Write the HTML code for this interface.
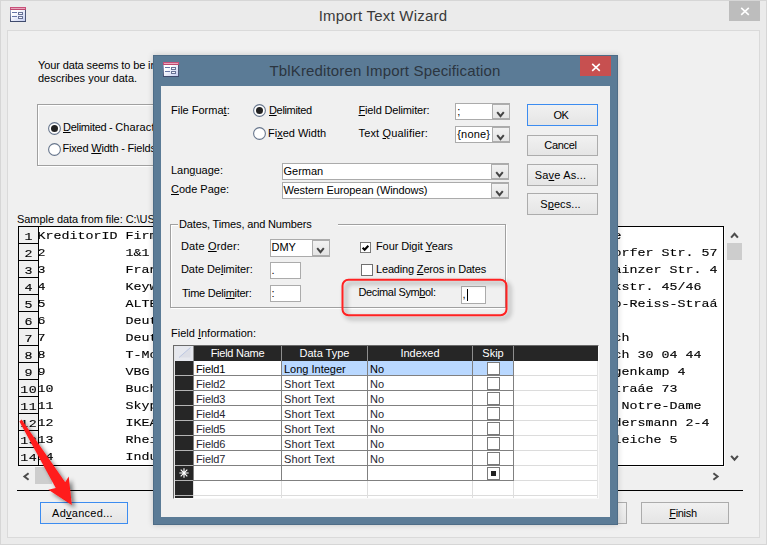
<!DOCTYPE html>
<html><head><meta charset="utf-8"><title>Import Text Wizard</title>
<style>
html,body{margin:0;padding:0;}
body{width:767px;height:545px;overflow:hidden;position:relative;background:#ebebeb;font-family:"Liberation Sans",sans-serif;font-size:11px;line-height:13px;color:#000;}
div,span,svg,i{position:absolute;box-sizing:border-box;}
.abs{position:absolute;}
.t{white-space:nowrap;font-size:11px;line-height:13px;}
u{text-decoration:underline;text-underline-offset:1px;text-decoration-thickness:1px;}
.title{white-space:nowrap;font-size:15px;line-height:18px;text-align:center;}
.combo{background:#fff;border:1px solid #ababab;}
.ct{left:0.5px;top:1px;white-space:nowrap;font-size:11px;line-height:13px;}
.cbtn{top:0;width:18px;border:1px solid #adadad;border-left:1px solid #adadad;background:linear-gradient(#f2f2f2,#e4e4e4);}
.chev{left:2.6px;top:6px;}
.tbox{background:#fff;border:1px solid #ababab;}
.caret{left:5px;top:2px;width:1px;height:12px;background:#000;}
.btn{border:1px solid #acacac;background:linear-gradient(#f1f1f1,#e5e5e5);text-align:center;white-space:nowrap;font-size:11px;}
.btn.focus{border-color:#3c8cf0;}
.hl{background:#a0a0a0;}
.mono{font-family:"Liberation Mono",monospace;font-size:13.33px;line-height:17px;white-space:pre;color:#000;-webkit-text-stroke:0.15px #000;transform:scaleY(0.88);transform-origin:0 12.5px;}
.rn{left:0;width:21px;height:18px;border:1px solid #000;background:#f0f0f0;text-align:center;font-family:"Liberation Mono",monospace;font-size:13.33px;letter-spacing:0.4px;padding-left:0.4px;padding-top:1px;line-height:17px;color:#000;-webkit-text-stroke:0.15px #000;}
.rd{position:static;display:inline-block;transform:scaleY(0.88);transform-origin:50% 12.5px;}
.hd{background:#262626;color:#fff;text-align:center;font-size:11px;line-height:14px;white-space:nowrap;}
.cell{white-space:nowrap;font-size:11px;line-height:14px;color:#3c3c3c;padding-left:2px;}
</style></head><body>

<div id="outer" style="left:0;top:0;width:767px;height:545px;background:#ebebeb;border:1px solid #d6d6d6;"></div>
<svg class="abs" style="left:10px;top:7px" width="16" height="15" viewBox="0 0 16 15" shape-rendering="crispEdges">
<defs><linearGradient id="ig10" x1="0" y1="0" x2="1" y2="1"><stop offset="0.25" stop-color="#ffffff"/><stop offset="1" stop-color="#c4cdf0"/></linearGradient>
<linearGradient id="il10" x1="0" y1="0" x2="0" y2="1"><stop offset="0.2" stop-color="#a4aecb"/><stop offset="1" stop-color="#3e486a"/></linearGradient></defs>
<rect x="0" y="0" width="16" height="15" fill="url(#il10)"/>
<rect x="15" y="3" width="1" height="12" fill="#4c5678"/>
<rect x="0" y="14" width="16" height="1" fill="#3e4a6c"/>
<rect x="1" y="3" width="14" height="11" fill="url(#ig10)"/>
<rect x="0" y="0" width="16" height="3" fill="#c8507a"/>
<rect x="1" y="1" width="14" height="1" fill="#e9a4bb"/>
<rect x="0" y="2" width="16" height="1" fill="#bd4a70"/>
<rect x="2" y="5" width="5" height="1" fill="#6676a6"/>
<rect x="2" y="9" width="5" height="1" fill="#6676a6"/>
<rect x="8" y="5" width="5" height="3" fill="#687296"/>
<rect x="9" y="6" width="3" height="1" fill="#f4f6fc"/>
<rect x="8" y="9" width="5" height="3" fill="#687296"/>
<rect x="9" y="10" width="3" height="1" fill="#f4f6fc"/>
</svg>
<div class="title" style="left:0;top:7px;width:766px;color:#3a3a3a;letter-spacing:0.22px;">Import Text Wizard</div>
<div class="" style="left:729px;top:1px;width:31px;height:20px;background:#bdbdbd;"></div>
<svg class="abs" style="left:739.5px;top:6px" width="10" height="10" viewBox="0 0 10 10"><path d="M1.2 1.8 L8.8 8.8 M8.8 1.8 L1.2 8.8" stroke="#fff" stroke-width="1.6" fill="none"/></svg>
<div class="" style="left:7px;top:30px;width:753px;height:508px;background:#f0f0f0;border:1px solid #dadada;"></div>
<span class="t " style="left:38px;top:59px;letter-spacing:-0.12px;">Your data seems to be in the format described</span>
<span class="t " style="left:38px;top:72px;">describes your data.</span>
<div class="" style="left:37px;top:104px;width:400px;height:62px;border:1px solid #a0a0a0;box-shadow:1px 1px 0 #fff, inset 1px 1px 0 #fff;"></div>
<svg class="abs" style="left:48.0px;top:122.0px" width="13" height="13" viewBox="0 0 13 13"><circle cx="6.5" cy="6.5" r="5.9" fill="#fff" stroke="#66758c" stroke-width="1.1"/><circle cx="6.5" cy="6.5" r="3.5" fill="#222"/></svg>
<span class="t " style="left:63px;top:121px;letter-spacing:-0.28px;"><u>D</u>elimited - <span style="position:static;letter-spacing:0.12px">Characters such as comma or tab</span></span>
<svg class="abs" style="left:48.0px;top:143.0px" width="13" height="13" viewBox="0 0 13 13"><circle cx="6.5" cy="6.5" r="5.9" fill="#fff" stroke="#66758c" stroke-width="1.1"/></svg>
<span class="t " style="left:62.5px;top:142px;letter-spacing:-0.2px;">Fixed <u>W</u>idth - Fields are aligned in columns</span>
<span class="t " style="left:17px;top:213px;letter-spacing:-0.06px;">Sample data from file: C:\USERS\DATA\KREDITOREN.TXT</span>
<div style="left:18px;top:226px;width:706px;height:240px;background:#fff;border:1px solid #000;overflow:hidden;box-shadow:1px 1px 0 #fafafa;">
<div class="rn" style="top:-1.0px;left:-1px;height:18px;"><span class="rd">1</span></div>
<span class="mono" style="left:18.6px;top:-0.4px;">KreditorID Firma</span>
<span class="mono" style="left:594.6px;top:-0.4px;">e</span>
<div class="rn" style="top:16.0px;left:-1px;height:18px;"><span class="rd">2</span></div>
<span class="mono" style="left:18.6px;top:16.6px;">2          1&amp;1 I</span>
<span class="mono" style="left:594.6px;top:16.6px;">orfer Str. 57</span>
<div class="rn" style="top:33.0px;left:-1px;height:18px;"><span class="rd">3</span></div>
<span class="mono" style="left:18.6px;top:33.6px;">3          Frank</span>
<span class="mono" style="left:594.6px;top:33.6px;">ainzer Str. 4</span>
<div class="rn" style="top:50.0px;left:-1px;height:18px;"><span class="rd">4</span></div>
<span class="mono" style="left:18.6px;top:50.6px;">4          Keywo</span>
<span class="mono" style="left:594.6px;top:50.6px;">kstr. 45/46</span>
<div class="rn" style="top:67.0px;left:-1px;height:18px;"><span class="rd">5</span></div>
<span class="mono" style="left:18.6px;top:67.6px;">5          ALTER</span>
<span class="mono" style="left:594.6px;top:67.6px;">o-Reiss-Straá</span>
<div class="rn" style="top:84.0px;left:-1px;height:18px;"><span class="rd">6</span></div>
<span class="mono" style="left:18.6px;top:84.6px;">6          Deuts</span>
<div class="rn" style="top:101.0px;left:-1px;height:18px;"><span class="rd">7</span></div>
<span class="mono" style="left:18.6px;top:101.6px;">7          Deuts</span>
<span class="mono" style="left:594.6px;top:101.6px;">ch</span>
<div class="rn" style="top:118.0px;left:-1px;height:18px;"><span class="rd">8</span></div>
<span class="mono" style="left:18.6px;top:118.6px;">8          T-Mob</span>
<span class="mono" style="left:594.6px;top:118.6px;">ch 30 04 44</span>
<div class="rn" style="top:135.0px;left:-1px;height:18px;"><span class="rd">9</span></div>
<span class="mono" style="left:18.6px;top:135.6px;">9          VBG  </span>
<span class="mono" style="left:594.6px;top:135.6px;">genkamp 4</span>
<div class="rn" style="top:152.0px;left:-1px;height:18px;"><span class="rd">10</span></div>
<span class="mono" style="left:18.6px;top:152.6px;">10         Buchh</span>
<span class="mono" style="left:594.6px;top:152.6px;">traáe 73</span>
<div class="rn" style="top:169.0px;left:-1px;height:18px;"><span class="rd">11</span></div>
<span class="mono" style="left:18.6px;top:169.6px;">11         Skype</span>
<span class="mono" style="left:594.6px;top:169.6px;"> Notre-Dame</span>
<div class="rn" style="top:186.0px;left:-1px;height:18px;"><span class="rd">12</span></div>
<span class="mono" style="left:18.6px;top:186.6px;">12         IKEA </span>
<span class="mono" style="left:594.6px;top:186.6px;">dersmann 2-4</span>
<div class="rn" style="top:203.0px;left:-1px;height:18px;"><span class="rd">13</span></div>
<span class="mono" style="left:18.6px;top:203.6px;">13         Rhein</span>
<span class="mono" style="left:594.6px;top:203.6px;">leiche 5</span>
<div class="rn" style="top:220.0px;left:-1px;height:19px;"><span class="rd">14</span></div>
<span class="mono" style="left:18.6px;top:220.6px;">14         Indus</span>
</div>
<svg class="abs" style="left:729px;top:231px" width="11" height="8" viewBox="0 0 11 8"><path d="M2.1 6.6 L5.5 2.9 L8.9 6.6" fill="none" stroke="#4c4c4c" stroke-width="2.1"/></svg>
<div class="" style="left:727px;top:243px;width:15px;height:17px;background:#cdcdcd;"></div>
<svg class="abs" style="left:729px;top:454px" width="11" height="8" viewBox="0 0 11 8"><path d="M2.1 1.9 L5.5 5.6 L8.9 1.9" fill="none" stroke="#4c4c4c" stroke-width="2.1"/></svg>
<svg class="abs" style="left:22px;top:471px" width="8" height="11" viewBox="0 0 8 11"><path d="M6.6 2.2 L2.4 5.5 L6.6 8.8" fill="none" stroke="#4c4c4c" stroke-width="2"/></svg>
<div class="" style="left:35px;top:467px;width:17px;height:17px;background:#cdcdcd;"></div>
<svg class="abs" style="left:711.5px;top:471px" width="8" height="11" viewBox="0 0 8 11"><path d="M1.4 2.2 L5.6 5.5 L1.4 8.8" fill="none" stroke="#4c4c4c" stroke-width="2"/></svg>
<div class="" style="left:17px;top:490px;width:726px;height:1px;background:#000;"></div>
<div class="btn focus" style="left:40px;top:502px;width:88px;height:22px;line-height:20px;letter-spacing:0.25px;padding-right:3px;">Ad<u>v</u>anced...</div>
<div class="btn" style="left:540px;top:502px;width:87px;height:22px;line-height:20px;padding-right:4px;"><u>N</u>ext &gt;</div>
<div class="btn" style="left:641px;top:502px;width:88px;height:22px;line-height:20px;letter-spacing:-0.3px;padding-right:4px;"><u>F</u>inish</div>
<div id="dlg" style="left:153px;top:55px;width:465px;height:470px;background:#5b7b96;border:1px solid #4e6c86;box-shadow:0 0 6px rgba(0,0,0,0.18);"></div>
<svg class="abs" style="left:163px;top:62px" width="16" height="15" viewBox="0 0 16 15" shape-rendering="crispEdges">
<defs><linearGradient id="ig163" x1="0" y1="0" x2="1" y2="1"><stop offset="0.25" stop-color="#ffffff"/><stop offset="1" stop-color="#c4cdf0"/></linearGradient>
<linearGradient id="il163" x1="0" y1="0" x2="0" y2="1"><stop offset="0.2" stop-color="#a4aecb"/><stop offset="1" stop-color="#3e486a"/></linearGradient></defs>
<rect x="0" y="0" width="16" height="15" fill="url(#il163)"/>
<rect x="15" y="3" width="1" height="12" fill="#4c5678"/>
<rect x="0" y="14" width="16" height="1" fill="#3e4a6c"/>
<rect x="1" y="3" width="14" height="11" fill="url(#ig163)"/>
<rect x="0" y="0" width="16" height="3" fill="#c8507a"/>
<rect x="1" y="1" width="14" height="1" fill="#e9a4bb"/>
<rect x="0" y="2" width="16" height="1" fill="#bd4a70"/>
<rect x="2" y="5" width="5" height="1" fill="#6676a6"/>
<rect x="2" y="9" width="5" height="1" fill="#6676a6"/>
<rect x="8" y="5" width="5" height="3" fill="#687296"/>
<rect x="9" y="6" width="3" height="1" fill="#f4f6fc"/>
<rect x="8" y="9" width="5" height="3" fill="#687296"/>
<rect x="9" y="10" width="3" height="1" fill="#f4f6fc"/>
</svg>
<div class="title" style="left:153px;top:62px;width:464px;color:#2b3540;letter-spacing:0.15px;">TblKreditoren Import Specification</div>
<div class="" style="left:580px;top:56px;width:31px;height:20px;background:#c75050;"></div>
<svg class="abs" style="left:591px;top:61.5px" width="10" height="10" viewBox="0 0 10 10"><path d="M1.2 1.8 L8.8 8.8 M8.8 1.8 L1.2 8.8" stroke="#fff" stroke-width="1.6" fill="none"/></svg>
<div class="" style="left:161px;top:86px;width:449px;height:431px;background:#f0f0f0;"></div>
<span class="t " style="left:171px;top:104px;">File Forma<u>t</u>:</span>
<svg class="abs" style="left:253.0px;top:104.0px" width="13" height="13" viewBox="0 0 13 13"><circle cx="6.5" cy="6.5" r="5.9" fill="#fff" stroke="#66758c" stroke-width="1.1"/><circle cx="6.5" cy="6.5" r="3.5" fill="#222"/></svg>
<span class="t " style="left:269px;top:104px;letter-spacing:-0.35px;"><u>D</u>elimited</span>
<svg class="abs" style="left:253.0px;top:127.0px" width="13" height="13" viewBox="0 0 13 13"><circle cx="6.5" cy="6.5" r="5.9" fill="#fff" stroke="#66758c" stroke-width="1.1"/></svg>
<span class="t " style="left:268px;top:127px;">Fi<u>x</u>ed Width</span>
<span class="t " style="left:358.5px;top:104px;letter-spacing:-0.15px;"><u>F</u>ield Delimiter:</span>
<span class="t " style="left:358.5px;top:127px;letter-spacing:0.15px;">Text <u>Q</u>ualifier:</span>
<div class="combo" style="left:455px;top:103px;width:55px;height:17px"><span class="ct" style="left:1.2px;">;</span><div class="cbtn" style="left:36px;height:15px"><svg class="chev" width="9" height="7" viewBox="0 0 9 7"><path d="M1.2 1.2 L4.5 5.2 L7.8 1.2" fill="none" stroke="#444" stroke-width="2"/></svg></div></div>
<div class="combo" style="left:455px;top:126px;width:55px;height:17px"><span class="ct" style="left:1.2px;letter-spacing:0.2px;">{none}</span><div class="cbtn" style="left:36px;height:15px"><svg class="chev" width="9" height="7" viewBox="0 0 9 7"><path d="M1.2 1.2 L4.5 5.2 L7.8 1.2" fill="none" stroke="#444" stroke-width="2"/></svg></div></div>
<div class="btn focus" style="left:527px;top:104px;width:71px;height:22px;line-height:20px;letter-spacing:-0.4px;padding-right:3px;">OK</div>
<div class="btn" style="left:527px;top:135px;width:71px;height:21px;line-height:19px;letter-spacing:-0.3px;padding-right:4px;">Cancel</div>
<div class="btn" style="left:527px;top:164px;width:71px;height:22px;line-height:20px;letter-spacing:0.2px;padding-right:4px;">Sa<u>v</u>e As...</div>
<div class="btn" style="left:527px;top:193px;width:71px;height:22px;line-height:20px;letter-spacing:0.1px;padding-right:4px;">S<u>p</u>ecs...</div>
<span class="t " style="left:171px;top:164px;">Lan<u>g</u>uage:</span>
<span class="t " style="left:171px;top:183px;"><u>C</u>ode Page:</span>
<div class="combo" style="left:282px;top:163px;width:227px;height:17px"><span class="ct" style="left:0.5px;">German</span><div class="cbtn" style="left:208px;height:15px"><svg class="chev" width="9" height="7" viewBox="0 0 9 7"><path d="M1.2 1.2 L4.5 5.2 L7.8 1.2" fill="none" stroke="#444" stroke-width="2"/></svg></div></div>
<div class="combo" style="left:282px;top:182px;width:227px;height:17px"><span class="ct" style="left:0.5px;letter-spacing:-0.1px;">Western European (Windows)</span><div class="cbtn" style="left:208px;height:15px"><svg class="chev" width="9" height="7" viewBox="0 0 9 7"><path d="M1.2 1.2 L4.5 5.2 L7.8 1.2" fill="none" stroke="#444" stroke-width="2"/></svg></div></div>
<div class="" style="left:170px;top:224px;width:336px;height:84px;border:1px solid #a0a0a0;box-shadow:1px 1px 0 #fff, inset 1px 1px 0 #fff;"></div>
<div class="" style="left:178px;top:220px;width:160px;height:10px;background:#f0f0f0;"></div>
<span class="t " style="left:179px;top:218px;letter-spacing:-0.15px;">Dates, Times, and Numbers</span>
<span class="t " style="left:181px;top:240px;letter-spacing:0.14px;">Date <u>O</u>rder:</span>
<span class="t " style="left:181px;top:263px;letter-spacing:-0.07px;">Date De<u>l</u>imiter:</span>
<span class="t " style="left:182px;top:287px;letter-spacing:-0.27px;">Time Deli<u>m</u>iter:</span>
<div class="combo" style="left:270px;top:239px;width:60px;height:18px"><span class="ct" style="left:0.5px;">DMY</span><div class="cbtn" style="left:41px;height:16px"><svg class="chev" width="9" height="7" viewBox="0 0 9 7"><path d="M1.2 1.2 L4.5 5.2 L7.8 1.2" fill="none" stroke="#444" stroke-width="2"/></svg></div></div>
<div class="tbox" style="left:270px;top:262px;width:31px;height:17px"><span class="ct">.</span></div>
<div class="tbox" style="left:270px;top:285px;width:31px;height:17px"><span class="ct">:</span></div>
<svg class="abs" style="left:360px;top:242px" width="11" height="11" viewBox="0 0 12 12"><rect x="0.5" y="0.5" width="11" height="11" fill="#fff" stroke="#707070"/><path d="M2.9 6.2 L5.1 8.4 L9.1 4.2" fill="none" stroke="#000" stroke-width="2.3"/></svg>
<span class="t " style="left:376px;top:240px;letter-spacing:-0.1px;">Four Digit <u>Y</u>ears</span>
<svg class="abs" style="left:361px;top:264px" width="12" height="12" viewBox="0 0 12 12"><rect x="0.5" y="0.5" width="11" height="11" fill="#fff" stroke="#707070"/></svg>
<span class="t " style="left:376px;top:263px;letter-spacing:-0.17px;">Leading <u>Z</u>eros in Dates</span>
<span class="t " style="left:358.5px;top:286px;letter-spacing:-0.36px;">Decimal Sym<u>b</u>ol:</span>
<div class="tbox" style="left:461px;top:286px;width:25px;height:18px"><span class="ct">,</span><i class="caret"></i></div>
<svg class="abs" style="left:330px;top:270px;overflow:visible" width="190" height="56" viewBox="0 0 190 56">
<defs><filter id="sh" x="-10%" y="-30%" width="125%" height="180%"><feGaussianBlur in="SourceAlpha" stdDeviation="2.4"/><feOffset dx="3" dy="3"/><feComponentTransfer><feFuncA type="linear" slope="0.42"/></feComponentTransfer><feMerge><feMergeNode/><feMergeNode in="SourceGraphic"/></feMerge></filter></defs>
<rect x="12.5" y="9.8" width="164" height="35.5" rx="6" ry="6" fill="none" stroke="#ff2020" stroke-width="2" filter="url(#sh)"/></svg>
<span class="t " style="left:171px;top:327px;">Field <u>I</u>nformation:</span>
<div style="left:173px;top:345px;width:426px;height:154px;background:#fff;border:1px solid #6a6a6a;border-right-color:#fafafa;border-bottom-color:#fafafa;overflow:hidden;">
<div style="left:0px;top:0px;width:1px;height:153px;background:#e6e6e6;"></div>
<div style="left:19px;top:-1px;width:405px;height:16px;background:#262626;"></div>
<div style="left:1px;top:0px;width:18px;height:15px;background:#e6e8ee;"><svg class="abs" style="left:0;top:0" width="18" height="15" viewBox="0 0 18 15"><path d="M4 11.5 L15.5 1.5 L15.5 11.5 Z" fill="#dcdee6"/><path d="M4 11.5 L15.5 1.5" stroke="#b8c4e0" stroke-width="0.9" fill="none"/></svg></div>
<div class="hd" style="left:20px;top:0px;width:87px;height:15px;letter-spacing:-0.25px;">Field Name</div>
<div class="hd" style="left:108px;top:0px;width:85px;height:15px;letter-spacing:0px;">Data Type</div>
<div class="hd" style="left:194px;top:0px;width:104px;height:15px;letter-spacing:0px;">Indexed</div>
<div class="hd" style="left:299px;top:0px;width:40px;height:15px;letter-spacing:0px;">Skip</div>
<div style="left:19px;top:0px;width:1px;height:15px;background:#8e8e8e;"></div>
<div style="left:107px;top:0px;width:1px;height:15px;background:#8e8e8e;"></div>
<div style="left:193px;top:0px;width:1px;height:15px;background:#8e8e8e;"></div>
<div style="left:298px;top:0px;width:1px;height:15px;background:#8e8e8e;"></div>
<div style="left:339px;top:0px;width:1px;height:15px;background:#8e8e8e;"></div>
<div style="left:1px;top:15px;width:18px;height:140px;background:#262626;"></div>
<div style="left:108px;top:15px;width:231px;height:14px;background:#b9d8ff;"></div>
<div style="left:20px;top:29px;width:404px;height:1px;background:#dcdcdc;"></div>
<div style="left:1px;top:29px;width:18px;height:1px;background:#b4b4b4;"></div>
<div style="left:20px;top:44px;width:404px;height:1px;background:#dcdcdc;"></div>
<div style="left:1px;top:44px;width:18px;height:1px;background:#b4b4b4;"></div>
<div style="left:20px;top:59px;width:404px;height:1px;background:#dcdcdc;"></div>
<div style="left:1px;top:59px;width:18px;height:1px;background:#b4b4b4;"></div>
<div style="left:20px;top:74px;width:404px;height:1px;background:#dcdcdc;"></div>
<div style="left:1px;top:74px;width:18px;height:1px;background:#b4b4b4;"></div>
<div style="left:20px;top:89px;width:404px;height:1px;background:#dcdcdc;"></div>
<div style="left:1px;top:89px;width:18px;height:1px;background:#b4b4b4;"></div>
<div style="left:20px;top:104px;width:404px;height:1px;background:#dcdcdc;"></div>
<div style="left:1px;top:104px;width:18px;height:1px;background:#b4b4b4;"></div>
<div style="left:20px;top:119px;width:404px;height:1px;background:#dcdcdc;"></div>
<div style="left:1px;top:119px;width:18px;height:1px;background:#b4b4b4;"></div>
<div style="left:20px;top:134px;width:404px;height:1px;background:#dcdcdc;"></div>
<div style="left:1px;top:134px;width:18px;height:1px;background:#b4b4b4;"></div>
<div style="left:20px;top:149px;width:404px;height:1px;background:#dcdcdc;"></div>
<div style="left:1px;top:149px;width:18px;height:1px;background:#b4b4b4;"></div>
<div style="left:19px;top:15px;width:1px;height:140px;background:#dedede;"></div>
<div style="left:107px;top:15px;width:1px;height:140px;background:#dedede;"></div>
<div style="left:193px;top:15px;width:1px;height:140px;background:#dedede;"></div>
<div style="left:298px;top:15px;width:1px;height:140px;background:#dedede;"></div>
<div style="left:339px;top:15px;width:1px;height:140px;background:#dedede;"></div>
<div style="left:423px;top:15px;width:1px;height:140px;background:#e4e4e4;"></div>
<div style="left:19px;top:29px;width:321px;height:1px;background:#808080;"></div>
<div style="left:19px;top:44px;width:321px;height:1px;background:#808080;"></div>
<div style="left:19px;top:59px;width:321px;height:1px;background:#808080;"></div>
<div style="left:19px;top:74px;width:321px;height:1px;background:#808080;"></div>
<div style="left:19px;top:89px;width:321px;height:1px;background:#808080;"></div>
<div style="left:19px;top:104px;width:321px;height:1px;background:#808080;"></div>
<div style="left:19px;top:119px;width:321px;height:1px;background:#808080;"></div>
<div style="left:19px;top:134px;width:321px;height:1px;background:#808080;"></div>
<div style="left:19px;top:15px;width:1px;height:120px;background:#808080;"></div>
<div style="left:107px;top:15px;width:1px;height:120px;background:#808080;"></div>
<div style="left:193px;top:15px;width:1px;height:120px;background:#808080;"></div>
<div style="left:298px;top:15px;width:1px;height:120px;background:#808080;"></div>
<div style="left:339px;top:15px;width:1px;height:120px;background:#808080;"></div>
<span class="cell" style="left:20px;top:15.8px;color:#000;letter-spacing:-0.12px">Field1</span>
<span class="cell" style="left:108px;top:15.8px;color:#000;letter-spacing:0px">Long Integer</span>
<span class="cell" style="left:194px;top:15.8px;color:#000">No</span>
<span class="cell" style="left:20px;top:30.8px;color:#262630;letter-spacing:-0.12px">Field2</span>
<span class="cell" style="left:108px;top:30.8px;color:#262630;letter-spacing:0.15px">Short Text</span>
<span class="cell" style="left:194px;top:30.8px;color:#262630">No</span>
<span class="cell" style="left:20px;top:45.8px;color:#262630;letter-spacing:-0.12px">Field3</span>
<span class="cell" style="left:108px;top:45.8px;color:#262630;letter-spacing:0.15px">Short Text</span>
<span class="cell" style="left:194px;top:45.8px;color:#262630">No</span>
<span class="cell" style="left:20px;top:60.8px;color:#262630;letter-spacing:-0.12px">Field4</span>
<span class="cell" style="left:108px;top:60.8px;color:#262630;letter-spacing:0.15px">Short Text</span>
<span class="cell" style="left:194px;top:60.8px;color:#262630">No</span>
<span class="cell" style="left:20px;top:75.8px;color:#262630;letter-spacing:-0.12px">Field5</span>
<span class="cell" style="left:108px;top:75.8px;color:#262630;letter-spacing:0.15px">Short Text</span>
<span class="cell" style="left:194px;top:75.8px;color:#262630">No</span>
<span class="cell" style="left:20px;top:90.8px;color:#262630;letter-spacing:-0.12px">Field6</span>
<span class="cell" style="left:108px;top:90.8px;color:#262630;letter-spacing:0.15px">Short Text</span>
<span class="cell" style="left:194px;top:90.8px;color:#262630">No</span>
<span class="cell" style="left:20px;top:105.8px;color:#262630;letter-spacing:-0.12px">Field7</span>
<span class="cell" style="left:108px;top:105.8px;color:#262630;letter-spacing:0.15px">Short Text</span>
<span class="cell" style="left:194px;top:105.8px;color:#262630">No</span>
<svg class="abs" style="left:313px;top:16px" width="13" height="13" viewBox="0 0 13 13" shape-rendering="crispEdges"><rect x="0.5" y="0.5" width="12" height="12" fill="#fff" stroke="#7a7a7a"/></svg>
<svg class="abs" style="left:313px;top:31px" width="13" height="13" viewBox="0 0 13 13" shape-rendering="crispEdges"><rect x="0.5" y="0.5" width="12" height="12" fill="#fff" stroke="#7a7a7a"/></svg>
<svg class="abs" style="left:313px;top:46px" width="13" height="13" viewBox="0 0 13 13" shape-rendering="crispEdges"><rect x="0.5" y="0.5" width="12" height="12" fill="#fff" stroke="#7a7a7a"/></svg>
<svg class="abs" style="left:313px;top:61px" width="13" height="13" viewBox="0 0 13 13" shape-rendering="crispEdges"><rect x="0.5" y="0.5" width="12" height="12" fill="#fff" stroke="#7a7a7a"/></svg>
<svg class="abs" style="left:313px;top:76px" width="13" height="13" viewBox="0 0 13 13" shape-rendering="crispEdges"><rect x="0.5" y="0.5" width="12" height="12" fill="#fff" stroke="#7a7a7a"/></svg>
<svg class="abs" style="left:313px;top:91px" width="13" height="13" viewBox="0 0 13 13" shape-rendering="crispEdges"><rect x="0.5" y="0.5" width="12" height="12" fill="#fff" stroke="#7a7a7a"/></svg>
<svg class="abs" style="left:313px;top:106px" width="13" height="13" viewBox="0 0 13 13" shape-rendering="crispEdges"><rect x="0.5" y="0.5" width="12" height="12" fill="#fff" stroke="#7a7a7a"/></svg>
<svg class="abs" style="left:313px;top:121px" width="13" height="13" viewBox="0 0 13 13" shape-rendering="crispEdges"><rect x="0.5" y="0.5" width="12" height="12" fill="#fff" stroke="#7a7a7a"/><rect x="4" y="4" width="5" height="5" fill="#222"/></svg>
<svg class="abs" style="left:5px;top:122px" width="10" height="10" viewBox="0 0 10 10"><path d="M5 0.3 V9.7 M0.3 5 H9.7 M1.7 1.7 L8.3 8.3 M8.3 1.7 L1.7 8.3" stroke="#fff" stroke-width="1.15" fill="none"/></svg>
</div>
<svg class="abs" style="left:0;top:400px;overflow:visible" width="120" height="120" viewBox="0 400 120 120">
<defs><filter id="sh2" x="-30%" y="-20%" width="180%" height="150%"><feGaussianBlur in="SourceAlpha" stdDeviation="2"/><feOffset dx="3" dy="2.5"/><feComponentTransfer><feFuncA type="linear" slope="0.5"/></feComponentTransfer><feMerge><feMergeNode/><feMergeNode in="SourceGraphic"/></feMerge></filter></defs>
<path d="M19.4 421.4 L21.6 419.6 L65.2 482.2 L68.7 476.6 L71.8 505 L48.4 489.8 L55.8 488 Z" fill="#ff1a1a" filter="url(#sh2)"/></svg>
</body></html>
